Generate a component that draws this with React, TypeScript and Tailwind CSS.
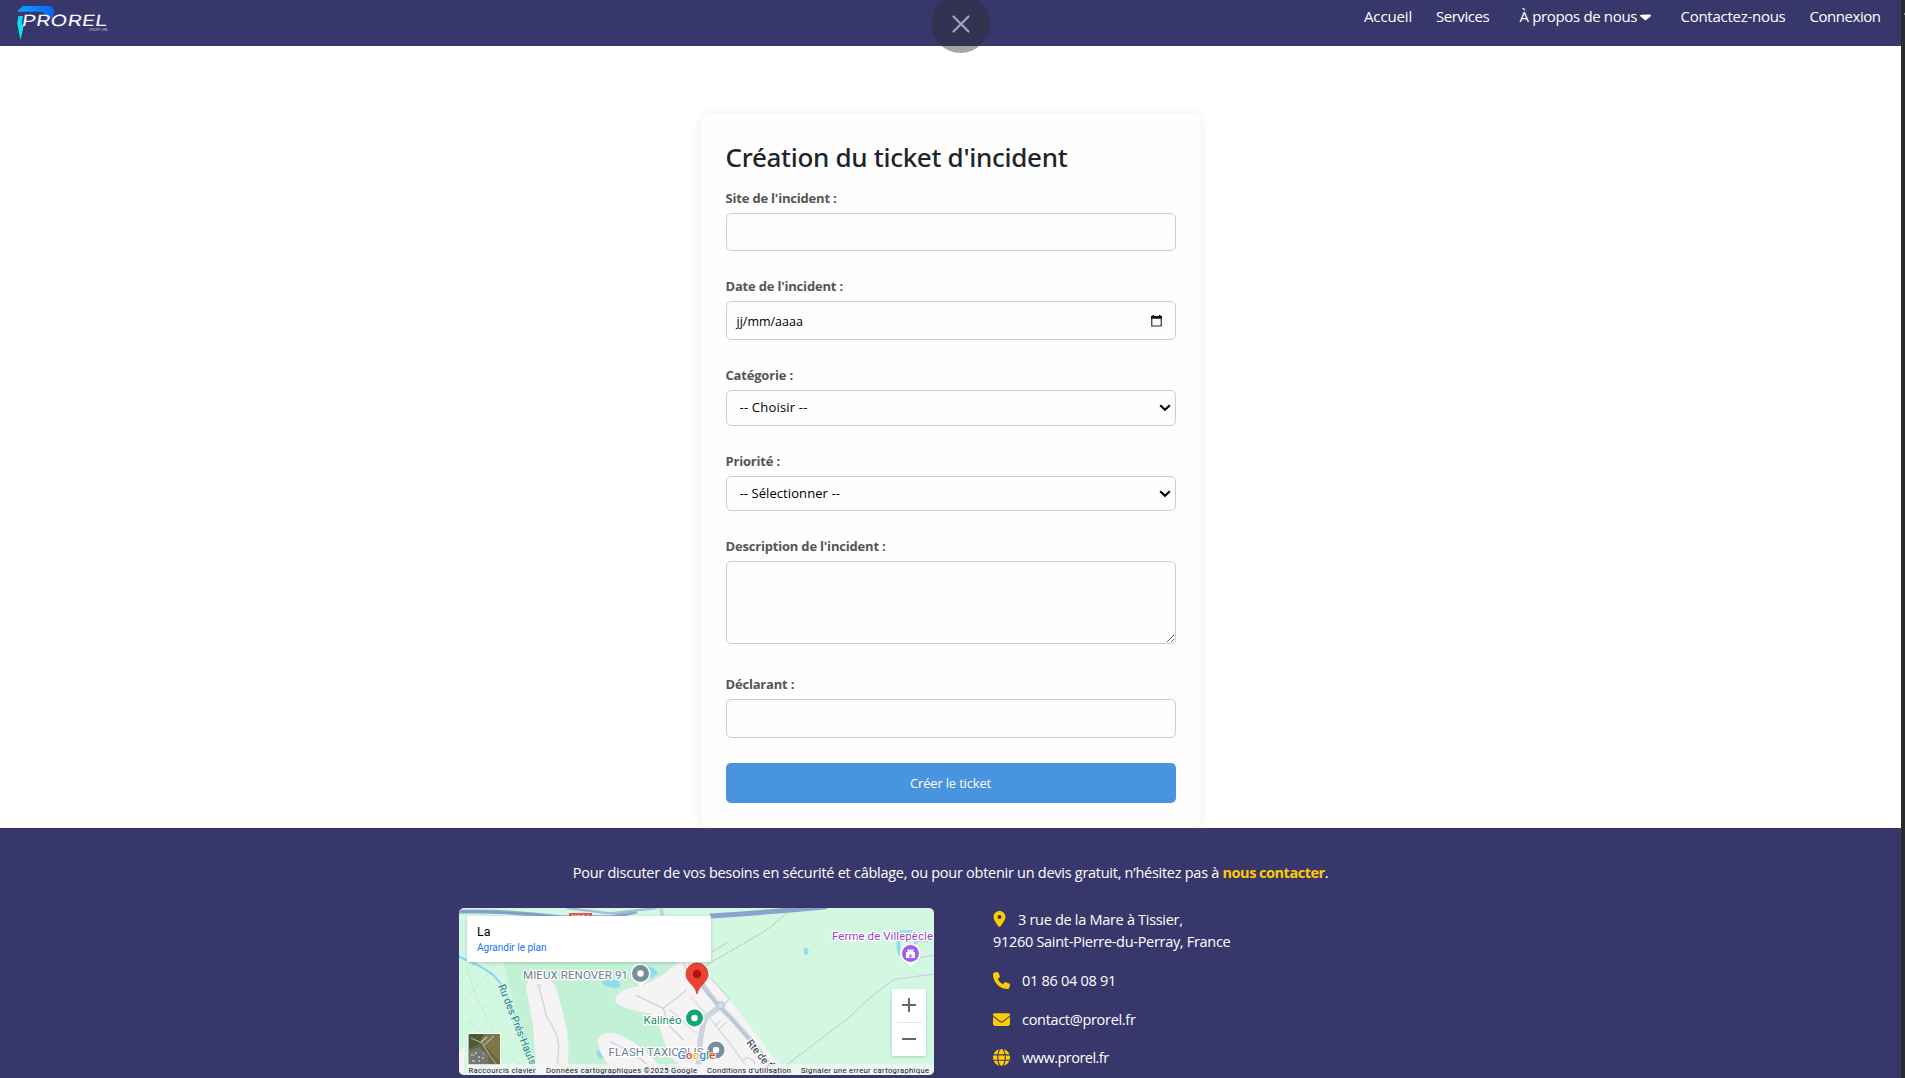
import type { ReactNode } from "react";
import { FaCaretDown, FaEnvelope, FaGlobe, FaLocationDot, FaPhone } from "react-icons/fa6";

function Logo() {
  return (
    <svg width="96" height="40" viewBox="0 0 96 40" className="ml-4 mt-[2px] shrink-0">
      <defs>
        <linearGradient id="swoosh" x1="0" y1="0" x2="1" y2="0">
          <stop offset="0" stopColor="#08a5ff" />
          <stop offset="1" stopColor="#0a62f5" />
        </linearGradient>
        <linearGradient id="blade" x1="0" y1="0" x2="0" y2="1">
          <stop offset="0" stopColor="#12d6f5" />
          <stop offset="1" stopColor="#08f5e0" />
        </linearGradient>
      </defs>
      <path d="M2 8.500 7 4h25c4 0 6.300 2.500 6 6l-1.500 6h-6.500c0-3.500-2-6.300-5-6.300H2z" fill="url(#swoosh)" />
      <path d="M2.500 14H7l-1.200 8 2 1.500L4.500 38 1.200 21z" fill="url(#blade)" />
      <text
        transform="translate(5 23.600) skewX(-10)"
        textLength="86"
        lengthAdjust="spacingAndGlyphs"
        fontFamily="Inter, sans-serif"
        fontSize="15.500"
        fontWeight="400"
        fill="#f4f5ff"
      >
        PROREL
      </text>
      <text x="73" y="28.500" textLength="18.500" lengthAdjust="spacingAndGlyphs" fontFamily="Inter, sans-serif" fontSize="3.500" fill="#c9c9e2">
        GROUPE-LINK
      </text>
    </svg>
  );
}

function Field({ label, className, children }: { label: string; className: string; children: ReactNode }) {
  return (
    <div className={"flex flex-col " + className}>
      <label className="flex h-5 shrink-0 items-center whitespace-nowrap pt-[2px] text-[13px] font-bold tracking-[-0.190px] text-[#555]">{label}</label>
      {children}
    </div>
  );
}

const control = "w-full shrink-0 rounded-[5px] border border-[#ccc] bg-[#fdfdfd] text-black outline-none";

function Select({ className, option }: { className: string; option: string }) {
  return (
    <div className="relative mt-[5px]">
      <select className={control + " block appearance-none pl-[13px] text-[13px] " + className}>
        <option>{option}</option>
      </select>
      <svg width="12" height="8" viewBox="0 0 12 8" className="pointer-events-none absolute right-[5px] top-[14px]" fill="none" stroke="#000" strokeWidth="2.200">
        <path d="M1.200 1.300 6 5.700 10.800 1.300" />
      </svg>
    </div>
  );
}

function Pin({ x, y, color, children }: { x: number; y: number; color: string; children?: ReactNode }) {
  return (
    <g transform={`translate(${x} ${y})`}>
      <path d="M-9 4 0 13 9 4z" fill="#fff" />
      <circle r="10" fill="#fff" />
      <circle r="8.500" fill={color} />
      {children ?? <circle r="3.200" fill="#fff" />}
    </g>
  );
}

function MapDrawing() {
  return (
    <svg width="475" height="167" viewBox="0 0 475 167" className="block" fontFamily="Roboto, sans-serif">
      <rect width="475" height="167" fill="#d3f8e2" />
      <g transform="translate(-9 -8) scale(.33333)">
        <path d="M160 180H760V525H250Q240 440 220 400 185 300 160 180Z" fill="#c3f1d5" />
        <path d="M228 262Q232 226 275 228 315 235 325 290 350 360 356 440L352 525H262L248 370Z" fill="#f5f3f4" />
        <path d="M442 425Q450 392 495 400 560 425 600 465L650 525H500Q450 470 442 425Z" fill="#f5f3f4" />
        <path d="M496 300Q498 268 570 258 640 230 660 205L700 180 750 190 800 250 870 340 1010 525H720Q690 490 660 470L640 420Q630 370 600 340 500 325 496 300Z" fill="#f5f3f4" />
        <path d="M27 455 45 440 40 525H27Z" fill="#f5f3f4" />
        <path d="M455 245Q480 235 505 240L512 262Q485 268 460 255ZM560 210Q590 195 612 205L625 220 605 234 565 232Z" fill="#92dcf0" />
        <path d="M438 455Q445 445 450 455L462 475 448 478Z" fill="#92dcf0" />
        <g stroke="#b1dcc6" strokeWidth="2" strokeDasharray="9 6" fill="none">
          <path d="M30 250 80 180M30 320 140 190M30 390 60 365 240 520M60 365 180 250M50 200 70 270 150 440" />
        </g>
        <path d="M27 170Q90 195 130 225 165 260 178 305 215 380 232 440 245 490 255 525" stroke="#8edaf0" strokeWidth="7" fill="none" />
        <path d="M27 35Q180 32 330 52H480L560 35" stroke="#8ea9cf" strokeWidth="12" fill="none" />
        <path d="M27 35Q180 32 330 52" stroke="#7c96c4" strokeWidth="3" fill="none" />
        <path d="M350 24 480 40 620 24" stroke="#a9bddb" strokeWidth="7" fill="none" />
        <path d="M632 24 640 55" stroke="#c9d4de" strokeWidth="12" />
        <g stroke="#ccd5df" strokeWidth="4" fill="none">
          <path d="M268 264 290 350Q325 400 326 440L322 500M480 425Q540 450 600 500M558 286 640 325 655 375 700 420M640 325 710 270M700 190 720 230" />
          <circle cx="267" cy="259" r="5" />
        </g>
      </g>
      <g transform="translate(231 -8) scale(.33333)">
        <path d="M60 48Q220 38 410 20" stroke="#8aa3ce" strokeWidth="15" fill="none" />
        <path d="M50 195 230 90 310 24" stroke="#9db5a9" strokeWidth="3" strokeDasharray="6 4" fill="none" />
        <path d="M25 195 118 295Q105 320 55 350M60 160 115 125" stroke="#cbd6df" strokeWidth="4" fill="none" />
        <path d="M270 510 480 350Q560 270 615 238L732 222M732 165 690 173M655 110 665 150 650 180M670 125H715" stroke="#c9d6dc" strokeWidth="4" fill="none" />
        <path d="M35 250Q80 315 120 350L190 430 250 510" stroke="#c7d1dc" strokeWidth="15" fill="none" />
        <path d="M30 255 200 440" stroke="#91a3ad" strokeWidth="3" strokeDasharray="6 4" fill="none" />
        <path d="M95 316 50 350Q30 380 25 500" stroke="#ccd5df" strokeWidth="17" fill="none" />
        <circle cx="92" cy="316" r="10" fill="#d5dde5" stroke="#bac8d5" strokeWidth="4" />
        <g stroke="#d3dae2" strokeWidth="4" fill="none">
          <path d="M60 355 120 430 170 500M85 390 110 365M75 380 90 362M0 290 55 350M-60 330 20 400M160 480Q180 460 200 500" />
        </g>
        <path d="M342 145Q350 139 356 153 357 166 343 164 339 155 342 145ZM620 92 667 90 668 98H628L632 140 628 172Q617 150 620 120ZM672 120H682V132H672Z" fill="#92dcf0" />
      </g>

      <rect x="110" y="5" width="23" height="9" fill="#e05a5c" />
      <text x="121.500" y="12" textAnchor="middle" fontSize="7.500" fontWeight="700" fill="#fff">N104</text>

      <g fontSize="11.500" strokeWidth="2.500" strokeLinejoin="round" paintOrder="stroke">
        <text x="64" y="70.500" textLength="105" fill="#6b7d8c" stroke="#fff">MIEUX RENOVER 91</text>
        <text x="184.500" y="115.500" textLength="38" fill="#188c68" stroke="#fff">Kalinéo</text>
        <text x="149.500" y="148" textLength="95" fill="#6b7d8c" stroke="#fff">FLASH TAXICOLIS</text>
        <text x="373" y="31.500" textLength="101" fill="#9442d2" stroke="#fff">Ferme de Villepècle</text>
        <text transform="translate(39 78) rotate(68)" fontSize="10.500" textLength="86" fill="#197b91" stroke="#d3f8e2">Ru des Prés-Hauts</text>
        <text transform="translate(287 135) rotate(51)" fontSize="10.500" fontWeight="500" textLength="49" fill="#43535e" stroke="#fff">Rte de Évry</text>
      </g>

      <Pin x={181.500} y={65.500} color="#78909c" />
      <Pin x={235.500} y={110} color="#13a674" />
      <Pin x={257} y={142} color="#78909c" />
      <Pin x={451.500} y={45.500} color="#a45af5">
        <path fillRule="evenodd" d="M-4.500 4.500V-1.500h1.500V-4.500h1v1.200h1.300V-4.500h1.400v1.200H2V-4.500h1v3h1.500v6zM-1 4V1h2v3z" fill="#fff" />
      </Pin>

      <path d="M238 86C236 76.500 227 74.500 227 66a11 11 0 0 1 22 0C249 74.500 240 76.500 238 86z" fill="#ea4335" stroke="#d13024" strokeWidth=".7" />
      <circle cx="238" cy="66" r="4.300" fill="#b31412" />

      <g>
        <rect x="8.500" y="125" width="33.500" height="33" rx="1.500" fill="#fff" />
        <rect x="9.500" y="126" width="31.500" height="31" fill="#65683f" />
        <path d="M26 126h15v28L29 141 21 131z" fill="#7d7747" />
        <path d="M10 126h15l-5 10-10 4z" fill="#4a5b35" />
        <path d="M10 143 20 139l9 8 1 10H10z" fill="#777772" />
        <path d="M12 130 23 135 31 148 38 157M24 138 35 128" stroke="#b4aa91" strokeWidth="1.100" fill="none" />
        <path d="M12 147h2m2-2h2m1 4h2m-8 4h3m3 0h2m2-3h2m-10-3h1m8-1h1M22 134l6-5" stroke="#c5c5c5" strokeWidth="1.500" />
      </g>

      <text x="218.500" y="150.500" textLength="38" lengthAdjust="spacingAndGlyphs" fontSize="11.500" fontWeight="500" stroke="#fff" strokeWidth="1.500" paintOrder="stroke">
        <tspan fill="#4285f4">G</tspan><tspan fill="#ea4335">o</tspan><tspan fill="#fbbc04">o</tspan><tspan fill="#4285f4">g</tspan><tspan fill="#34a853">l</tspan><tspan fill="#ea4335">e</tspan>
      </text>

      <rect x="8" y="156" width="467" height="11" fill="#f5f5f5" fillOpacity=".78" />
      <g fontSize="7.600" fill="#111">
        <text x="9.500" y="164.700" textLength="67">Raccourcis clavier</text>
        <text x="87" y="164.700" textLength="151">Données cartographiques ©2025 Google</text>
        <text x="248" y="164.700" textLength="84">Conditions d'utilisation</text>
        <text x="342" y="164.700" textLength="128">Signaler une erreur cartographique</text>
      </g>
    </svg>
  );
}

function MapEmbed() {
  return (
    <div className="relative h-[167px] w-[475px] shrink-0 overflow-hidden rounded-[5px] font-['Roboto',sans-serif]">
      <MapDrawing />
      <div className="absolute left-2 top-2 flex h-[46px] w-[244px] flex-col bg-white pl-[10px] pt-[8px] shadow-[0_1px_4px_-1px_rgba(0,0,0,0.3)]">
        <span className="text-[12.500px] leading-4 text-black">La</span>
        <span className="text-[10px] leading-4 text-[#1a73e8]">Agrandir le plan</span>
      </div>
      <div className="absolute right-2 top-[81px] flex h-[67px] w-[34px] flex-col items-center bg-white shadow-[0_1px_4px_-1px_rgba(0,0,0,0.3)]">
        <span className="flex h-[32px] items-center justify-center">
          <svg width="14" height="14" viewBox="0 0 14 14" stroke="#666" strokeWidth="2"><path d="M7 0v14M0 7h14" /></svg>
        </span>
        <span className="mt-px h-px w-[25px] shrink-0 bg-[#e6e6e6]" />
        <span className="flex h-[32px] items-center justify-center">
          <svg width="14" height="14" viewBox="0 0 14 14" stroke="#666" strokeWidth="2"><path d="M0 7h14" /></svg>
        </span>
      </div>
    </div>
  );
}

export default function App() {
  return (
    <div className="flex h-[1078px] w-full overflow-hidden bg-white font-['Open_Sans',sans-serif]">
      <div className="relative flex min-w-0 flex-1 flex-col">
        <header className="flex h-[46px] shrink-0 items-start justify-between bg-[#38376c]">
          <Logo />
          <nav className="mr-[20px] flex h-[32px] items-center whitespace-nowrap text-[15px] text-white">
            <a className="w-[72px] tracking-[-0.140px]">Accueil</a>
            <a className="w-[83.500px] tracking-[-0.470px]">Services</a>
            <a className="flex w-[161px] items-center gap-[3px] tracking-[-0.340px]">
              À propos de nous
              <FaCaretDown className="h-[15px] w-[11px]" preserveAspectRatio="none" />
            </a>
            <a className="w-[129px] tracking-[-0.270px]">Contactez-nous</a>
            <a className="w-[71.500px] tracking-[-0.460px]">Connexion</a>
          </nav>
        </header>

        <div className="absolute left-[931px] top-[-6px] flex size-[59px] items-center justify-center rounded-full bg-[rgba(46,46,46,0.43)]">
          <svg width="18" height="18" viewBox="0 0 18 18" stroke="#a3a2bd" strokeWidth="2.300" strokeLinecap="round">
            <path d="M1.500 1.500 16.500 16.500M16.500 1.500 1.500 16.500" />
          </svg>
        </div>

        <main className="flex h-[782px] shrink-0 justify-center pt-[68px]">
          <form className="flex h-[714px] w-[500px] flex-col rounded-[10px] bg-[#fefefe] px-[25px] pt-[25px] shadow-[0_0_12px_rgba(0,0,0,0.08)]">
            <h1 className="h-[49px] shrink-0 whitespace-nowrap font-['Noto_Sans',sans-serif] text-[26px] font-medium leading-[36px] tracking-[-0.300px] text-[#212529]">
              Création du ticket d'incident
            </h1>
            <Field label="Site de l'incident :" className="h-[88px]">
              <input className={control + " mt-[5px] h-[38px] px-2"} />
            </Field>
            <Field label="Date de l'incident :" className="h-[89px]">
              <div className={control + " mt-[5px] flex h-[39px] items-center justify-between pl-[10px] pr-[13px] text-[12.500px]"}>
                <span className="pt-[3px]">jj/mm/aaaa</span>
                <svg width="11" height="12" viewBox="0 0 11 12" fill="none">
                  <path d="M.75 2.500h9.500v8.500H.75z" stroke="#333" strokeWidth="1.200" />
                  <path d="M0 1h11v2.800H0zM1.500 0h1.500v2H1.500zM8 0h1.500v2H8z" fill="#111" />
                </svg>
              </div>
            </Field>
            <Field label="Catégorie :" className="h-[86px]">
              <Select className="h-[36px] tracking-[0.200px]" option="-- Choisir --" />
            </Field>
            <Field label="Priorité :" className="h-[85px]">
              <Select className="h-[35px] tracking-[0.080px]" option="-- Sélectionner --" />
            </Field>
            <Field label="Description de l'incident :" className="h-[138px]">
              <textarea className={control + " mt-[5px] h-[83px]"} />
            </Field>
            <Field label="Déclarant :" className="h-[89px]">
              <input className={control + " mt-[5px] h-[39px] px-2"} />
            </Field>
            <button type="button" className="h-[40px] w-full shrink-0 rounded-[5px] bg-[#4894de] pt-px text-[13px] tracking-[-0.180px] text-white">
              Créer le ticket
            </button>
          </form>
        </main>

        <footer className="flex flex-1 flex-col bg-[#38376c] text-[14.500px] text-white">
          <p className="mt-[33px] flex h-[24px] shrink-0 items-center justify-center whitespace-pre tracking-[-0.270px]">
            {"Pour discuter de vos besoins en sécurité et câblage, ou pour obtenir un devis gratuit, n’hésitez pas à "}
            <a className="font-bold tracking-[-0.490px] text-[#fc0]">nous contacter</a>.
          </p>
          <div className="mt-[23px] flex gap-[59px] pl-[459px]">
            <MapEmbed />
            <ul className="flex flex-col whitespace-nowrap pt-px leading-[22px]">
              <li className="mb-[17px] tracking-[-0.300px]">
                <span className="flex items-center">
                  <FaLocationDot className="mb-[2px] mr-[12px] h-[16px] w-[13px] text-[#fc0]" />
                  3 rue de la Mare à Tissier,
                </span>
                91260 Saint-Pierre-du-Perray, France
              </li>
              <li className="mb-[17px] flex items-center tracking-[-0.280px]">
                <FaPhone className="mb-[2px] mr-[12px] size-[17px] text-[#fc0]" />
                01 86 04 08 91
              </li>
              <li className="mb-[16px] flex items-center tracking-[-0.310px]">
                <FaEnvelope className="mb-[2px] mr-[12px] size-[17px] text-[#fc0]" />
                contact@prorel.fr
              </li>
              <li className="flex items-center tracking-[-0.520px]">
                <FaGlobe className="mb-[2px] mr-[12px] size-[17px] text-[#fc0]" />
                www.prorel.fr
              </li>
            </ul>
          </div>
        </footer>
      </div>
      <div className="flex w-1 shrink-0 justify-end bg-[#2b2b2b] pt-[13px]">
        <span className="h-[2px] w-px bg-[#888]" />
      </div>
    </div>
  );
}
